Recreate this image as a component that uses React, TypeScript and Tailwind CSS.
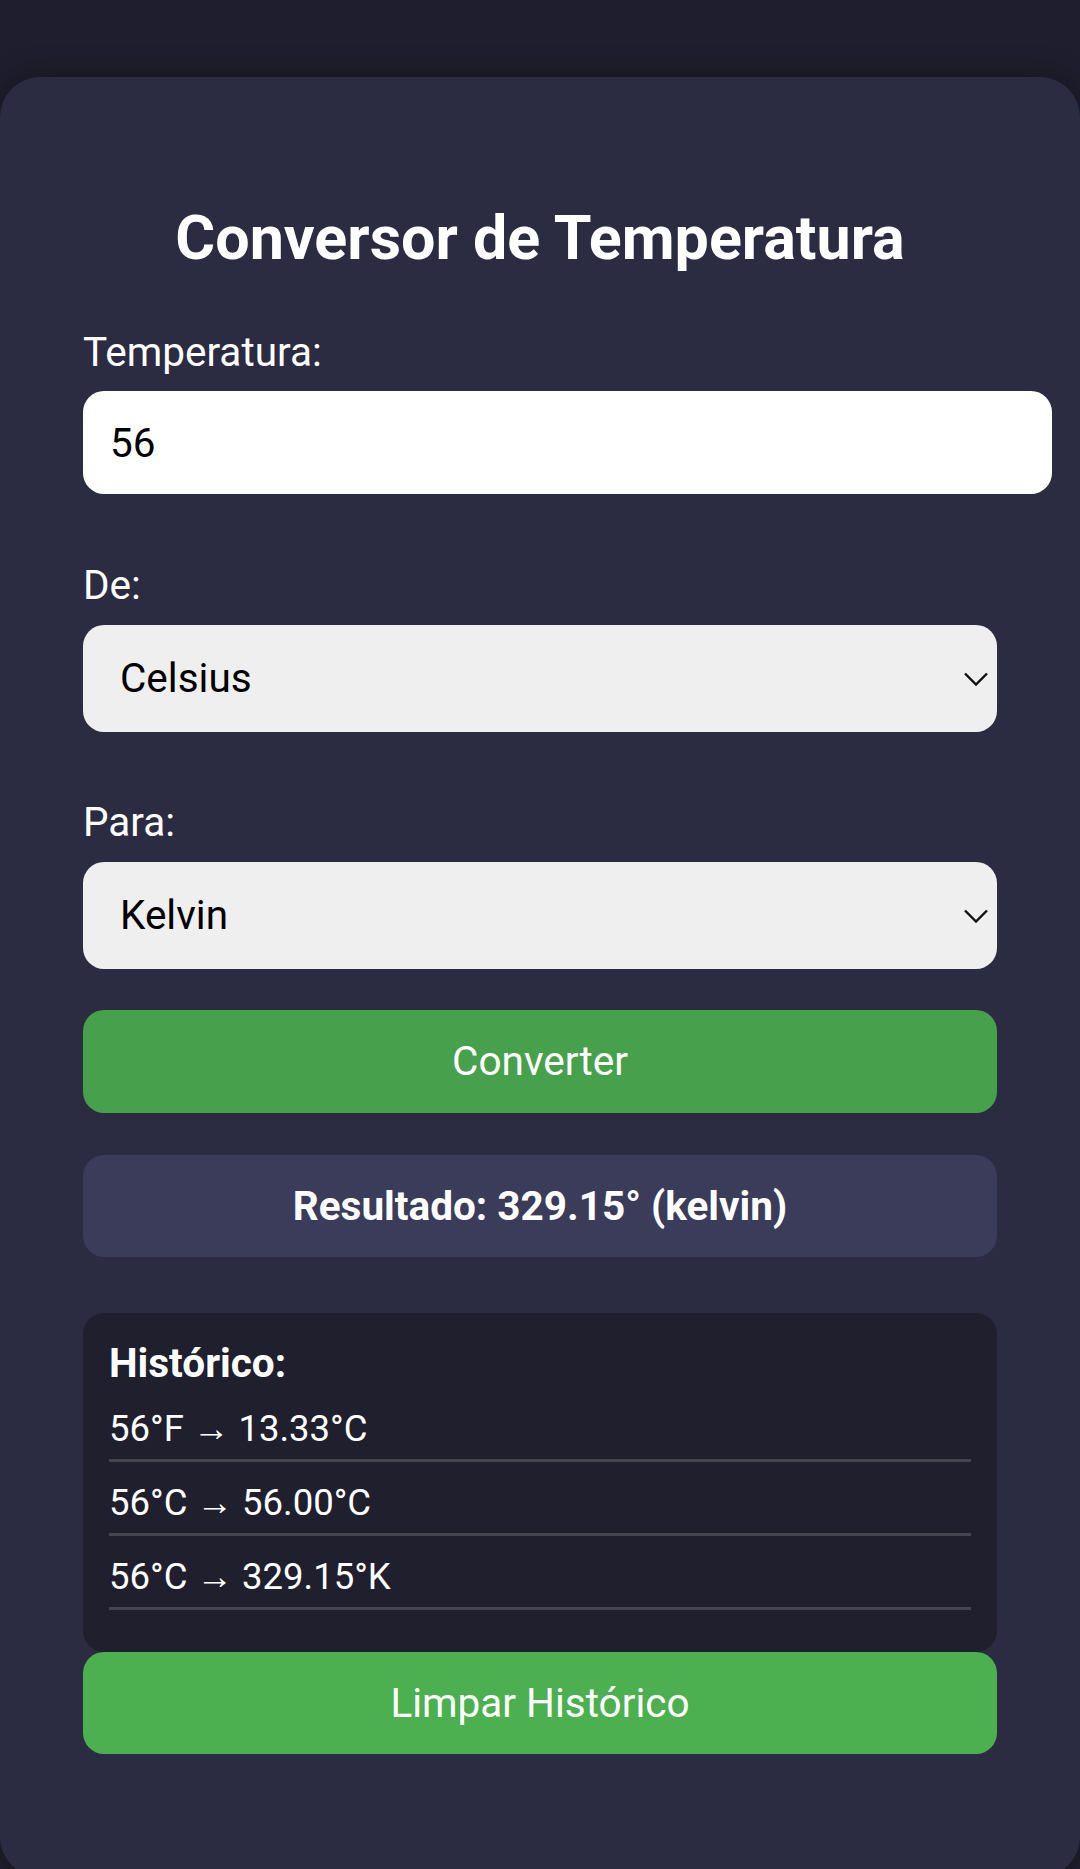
import { useState } from 'react';

const units = ['Celsius', 'Fahrenheit', 'Kelvin'];

const history = ['56°F → 13.33°C', '56°C → 56.00°C', '56°C → 329.15°K'];

function Chevron() {
  return (
    <svg
      className="pointer-events-none absolute right-[9px] top-1/2 h-[14px] w-[24px] -translate-y-1/2"
      viewBox="0 0 24 14"
      fill="none"
      stroke="#111"
      strokeWidth="2.4"
    >
      <path d="M1 1.5 L12 12.5 L23 1.5" />
    </svg>
  );
}

function UnitSelect({ value, onChange }: { value: string; onChange: (v: string) => void }) {
  return (
    <div className="relative mt-[15px] w-full">
      <select
        value={value}
        onChange={(e) => onChange(e.target.value)}
        className="block h-[107px] w-full appearance-none rounded-[21px] bg-[#efefef] pl-[37px] text-[40.5px] text-black outline-none"
      >
        {units.map((u) => (
          <option key={u} value={u}>
            {u}
          </option>
        ))}
      </select>
      <Chevron />
    </div>
  );
}

export default function App() {
  const [temp, setTemp] = useState('56');
  const [from, setFrom] = useState('Celsius');
  const [to, setTo] = useState('Kelvin');

  return (
    <div className="h-[1869px] overflow-hidden bg-[#1e1e2e] pt-[77px] font-['Roboto',sans-serif]">
      <div className="h-[1800px] rounded-[40px] bg-[#2b2b42] px-[83px] pt-[124px] shadow-[0_0_30px_rgba(0,0,0,0.35)]">
        <h1 className="text-center text-[61px] font-bold leading-[74px] text-white">Conversor de Temperatura</h1>

        <label className="mt-[53px] block text-[40.5px] leading-[49px] text-white">Temperatura:</label>
        <input
          value={temp}
          onChange={(e) => setTemp(e.target.value)}
          className="mt-[14px] block h-[103px] w-[969px] rounded-[21px] bg-white px-[27px] text-[40.5px] text-black outline-none"
        />

        <label className="mt-[67px] block text-[40.5px] leading-[49px] text-white">De:</label>
        <UnitSelect value={from} onChange={setFrom} />

        <label className="mt-[66px] block text-[40.5px] leading-[49px] text-white">Para:</label>
        <UnitSelect value={to} onChange={setTo} />

        <button
          type="button"
          className="mt-[41px] block h-[103px] w-full rounded-[21px] bg-[#47a04b] text-[40.5px] text-white"
        >
          Converter
        </button>

        <div className="mt-[42px] flex h-[102px] items-center justify-center rounded-[21px] bg-[#3b3b5a] text-[40.5px] font-bold text-white">
          Resultado: 329.15° (kelvin)
        </div>

        <div className="mt-[56px] rounded-[21px] bg-[#1f1f2e] px-[26px] pb-[42px] pt-[26px]">
          <p className="text-[40.5px] font-bold leading-[49px] text-white">Histórico:</p>
          <ul>
            {history.map((item) => (
              <li
                key={item}
                className="border-b-[3px] border-[#45454f] pb-[9px] pt-[19px] text-[36.5px] leading-[43px] text-white"
              >
                {item}
              </li>
            ))}
          </ul>
        </div>

        <button
          type="button"
          className="block h-[102px] w-full rounded-[21px] bg-[#4caf50] text-[40.5px] text-white"
        >
          Limpar Histórico
        </button>
      </div>
    </div>
  );
}
